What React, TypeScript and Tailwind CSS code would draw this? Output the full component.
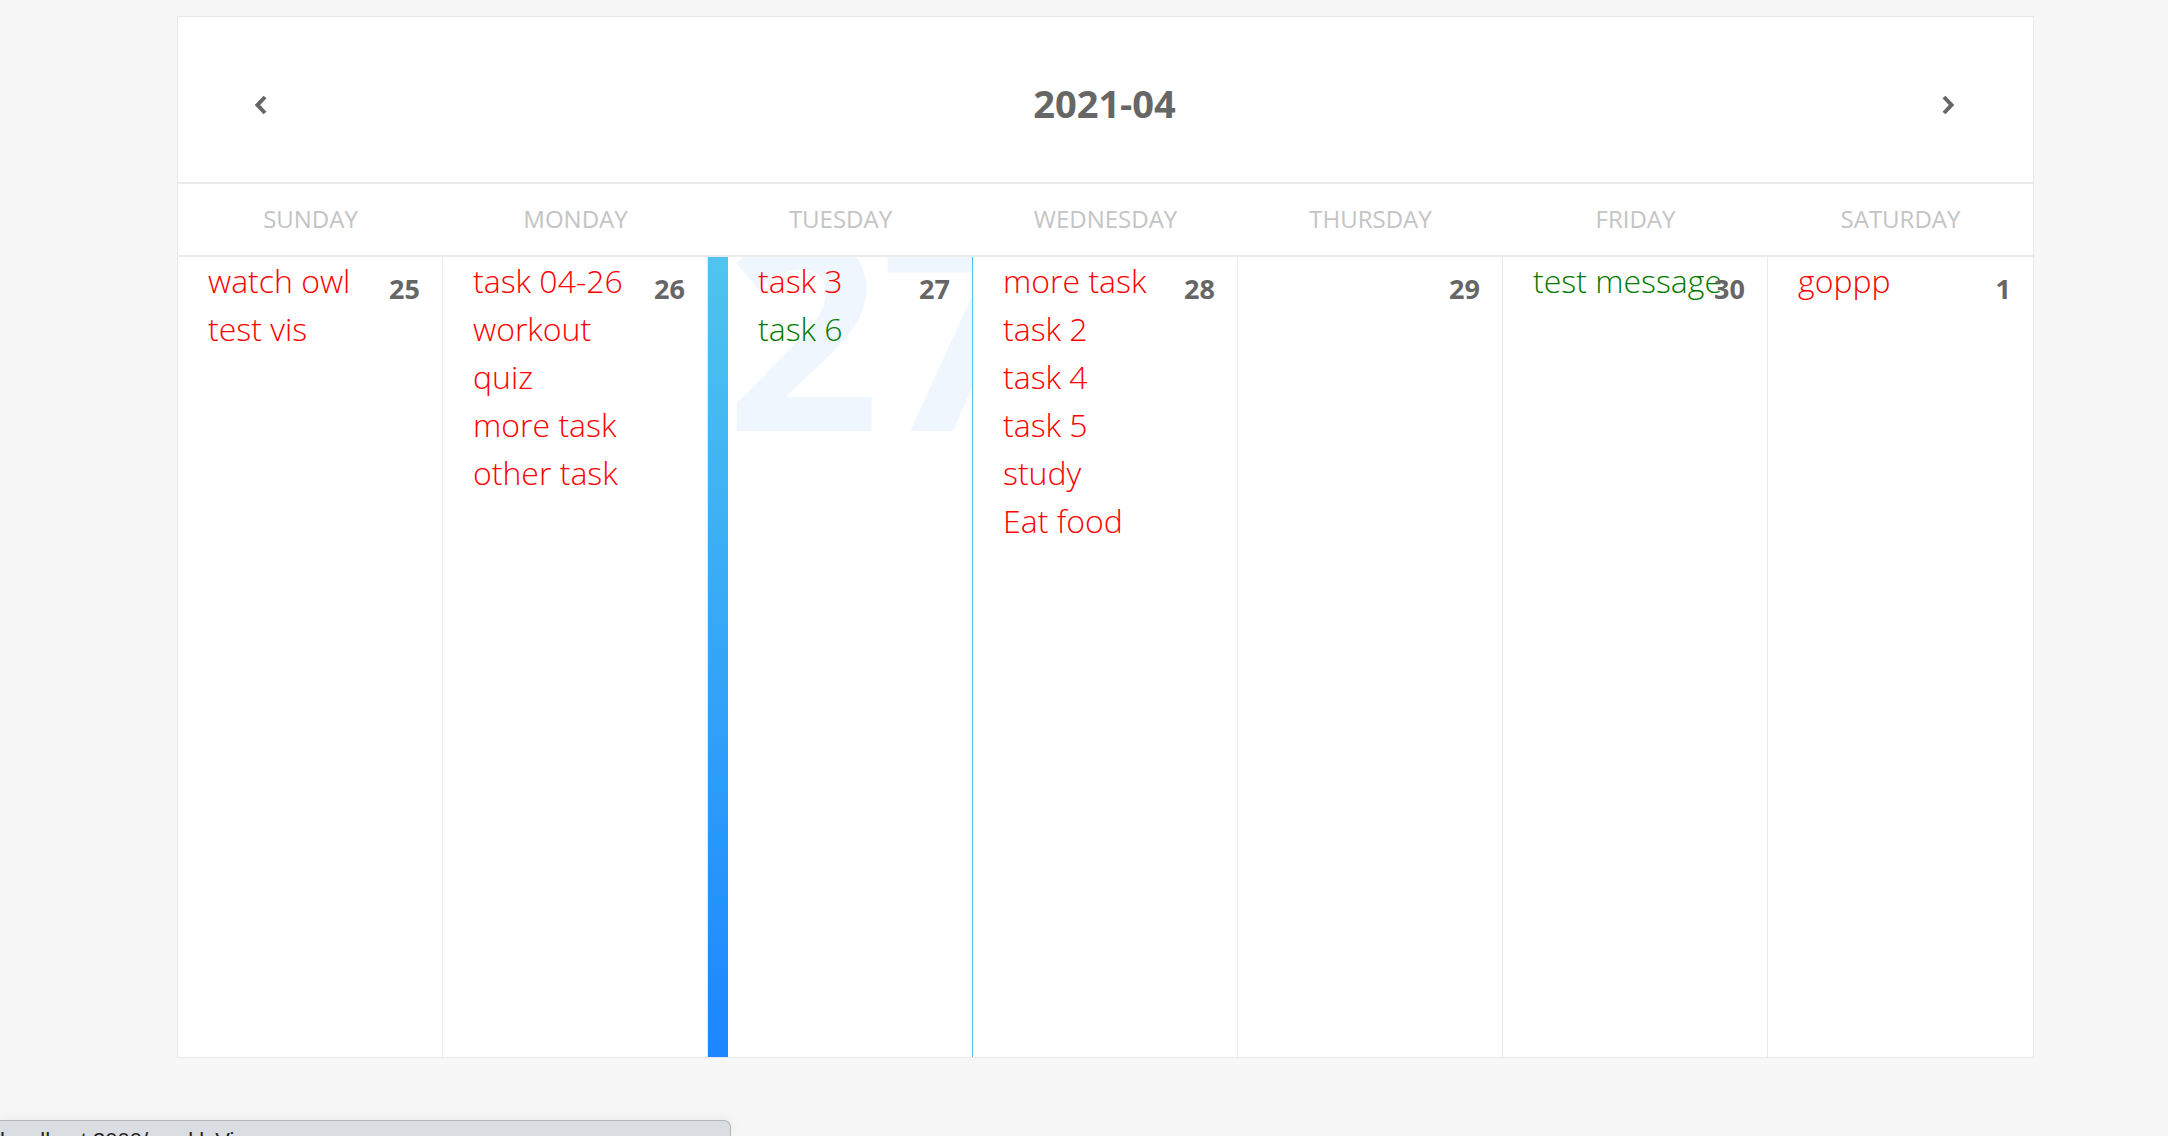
import { ReactNode } from 'react'

type Task = { text: string; done?: boolean }

type Day = {
  name: string
  date: number
  tasks: Task[]
  today?: boolean
}

const DAYS: Day[] = [
  { name: 'Sunday', date: 25, tasks: [{ text: 'watch owl' }, { text: 'test vis' }] },
  {
    name: 'Monday',
    date: 26,
    tasks: [
      { text: 'task 04-26' },
      { text: 'workout' },
      { text: 'quiz' },
      { text: 'more task' },
      { text: 'other task' },
    ],
  },
  { name: 'Tuesday', date: 27, today: true, tasks: [{ text: 'task 3' }, { text: 'task 6', done: true }] },
  {
    name: 'Wednesday',
    date: 28,
    tasks: [
      { text: 'more task' },
      { text: 'task 2' },
      { text: 'task 4' },
      { text: 'task 5' },
      { text: 'study' },
      { text: 'Eat food' },
    ],
  },
  { name: 'Thursday', date: 29, tasks: [] },
  { name: 'Friday', date: 30, tasks: [{ text: 'test message', done: true }] },
  { name: 'Saturday', date: 1, tasks: [{ text: 'goppp' }] },
]

function Chevron({ dir }: { dir: 'left' | 'right' }) {
  return (
    <svg width="14" height="22" viewBox="0 0 14 22" className="text-[#666]">
      <polyline
        points={dir === 'left' ? '11,3 3.5,11 11,19' : '3,3 10.5,11 3,19'}
        fill="none"
        stroke="currentColor"
        strokeWidth="4"
      />
    </svg>
  )
}

function DayCell({ day, last }: { day: Day; last: boolean }) {
  const border = day.today
    ? 'border-r border-[#4fc3ee]'
    : last
      ? ''
      : 'border-r border-[#e9e9e9]'

  const body: ReactNode = (
    <div className="flex flex-1 min-w-0 pl-[30px] pr-[22px]">
      <div className="flex-1 min-w-0 whitespace-nowrap">
        {day.tasks.map((t, i) => (
          <div
            key={i}
            className={`text-[32px] leading-[48px] font-light ${t.done ? 'text-[#007a00]' : 'text-[#ff0000]'}`}
          >
            {t.text}
          </div>
        ))}
      </div>
      <div className="relative shrink-0 mt-[14px] text-[27px] leading-[36px] font-bold text-[#666]">
        {day.date}
      </div>
    </div>
  )

  return (
    <div className={`relative flex overflow-hidden ${border}`}>
      {day.today && (
        <>
          <div className="absolute left-[18px] top-[-66px] text-[270px] leading-[270px] font-bold text-[#eff6fd] select-none">
            {day.date}
          </div>
          <div className="relative w-[20px] shrink-0 bg-gradient-to-b from-[#4fc4ee] to-[#1b86ff]" />
        </>
      )}
      <div className="relative flex flex-1 min-w-0">{body}</div>
    </div>
  )
}

export default function App() {
  return (
    <div
      className="relative h-[1136px] overflow-hidden bg-[#f7f7f7]"
      style={{ fontFamily: '"Open Sans", "Liberation Sans", sans-serif' }}
    >
      <div className="pt-[16px] pl-[177px]">
        <div className="w-[1857px] border border-[#e8e8e8] bg-white">
          <div className="flex h-[167px] items-center justify-between border-b-2 border-[#ebebeb] pt-[10px] pl-[76px] pr-[78px]">
            <Chevron dir="left" />
            <div className="-mt-[3px] text-[38px] font-bold text-[#666]">2021-04</div>
            <Chevron dir="right" />
          </div>

          <div className="grid h-[73px] grid-cols-7 items-center border-b-2 border-[#ebebeb]">
            {DAYS.map((d) => (
              <div key={d.name} className="-mt-[2px] text-center text-[24px] uppercase text-[#c4c4c4]">
                {d.name}
              </div>
            ))}
          </div>

          <div className="grid h-[800px] grid-cols-7">
            {DAYS.map((d, i) => (
              <DayCell key={d.name} day={d} last={i === DAYS.length - 1} />
            ))}
          </div>
        </div>
      </div>

      <div className="absolute bottom-0 left-0 h-[16px] w-[731px] overflow-hidden rounded-tr-[7px] border-t border-r border-[#b4b6b9] bg-[#dadde1] shadow-[0_-2px_12px_rgba(0,0,0,0.06)]">
        <div
          className="pt-[7px] text-[22px] leading-[26px] text-[#222]"
          style={{ fontFamily: '"Liberation Sans", Arial, sans-serif' }}
        >
          localhost:3000/weeklyView
        </div>
      </div>
    </div>
  )
}
